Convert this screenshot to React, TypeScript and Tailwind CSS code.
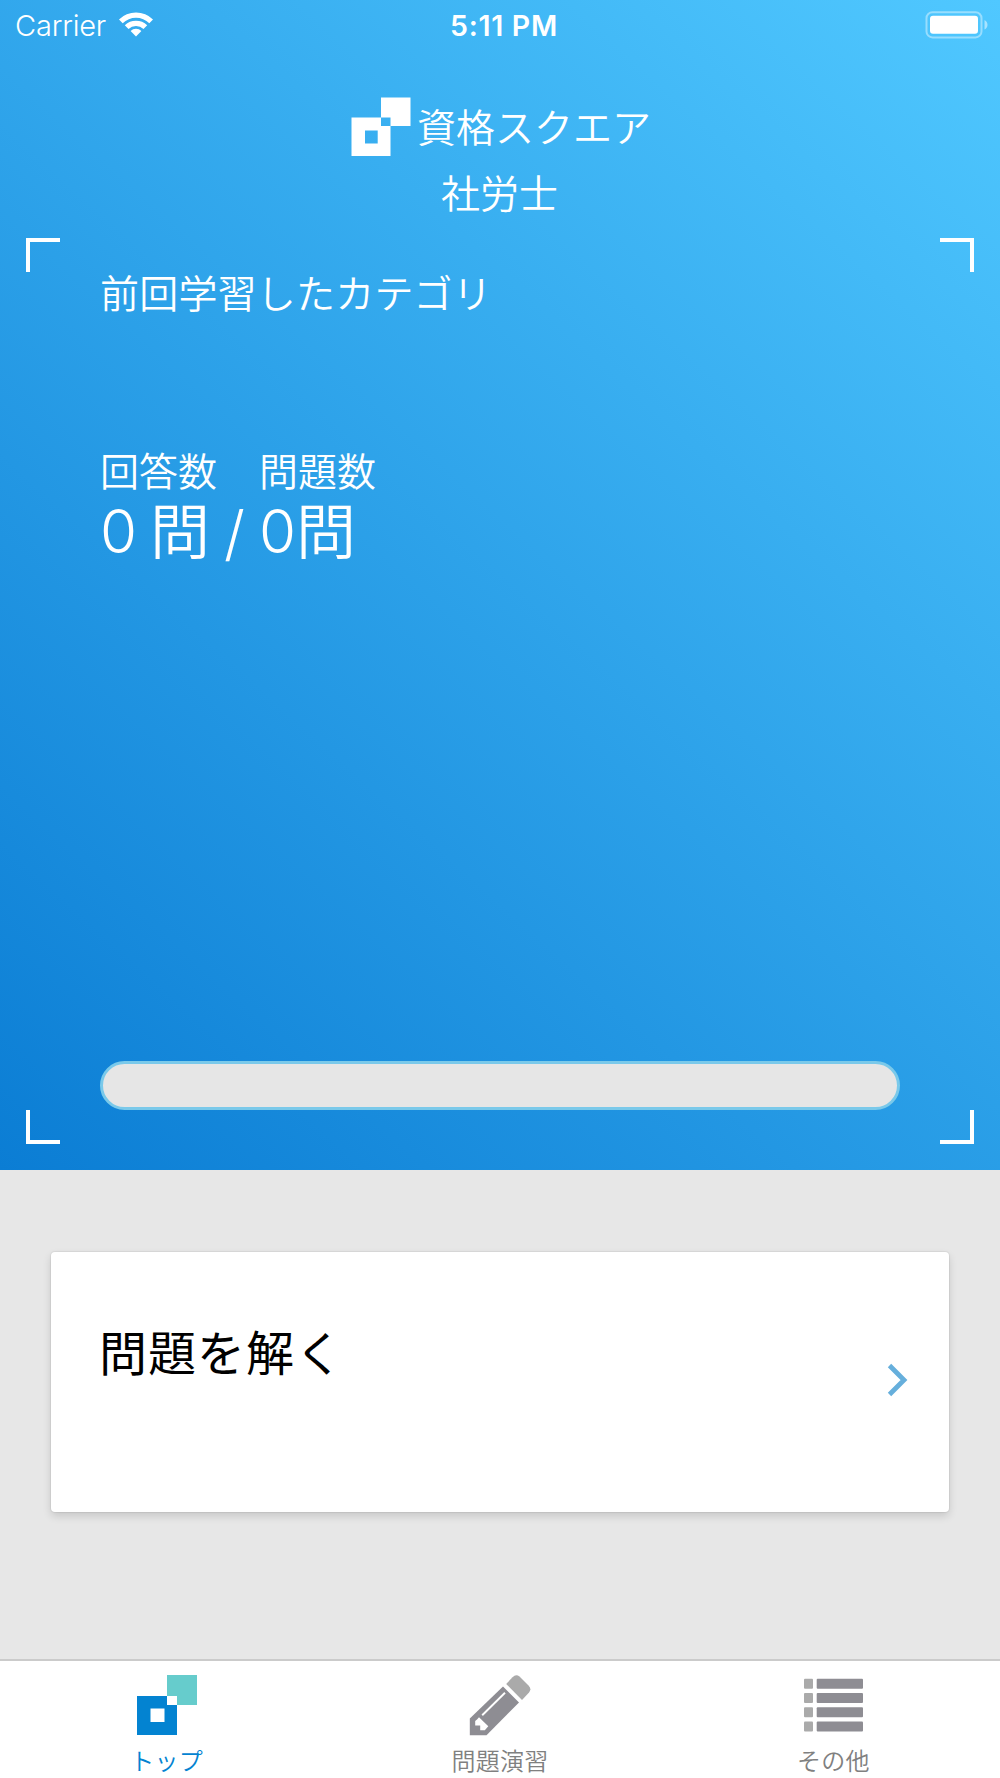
import React from 'react';

type TabId = 'top' | 'practice' | 'other';

interface TabItem {
  id: TabId;
  label: string;
  icon: React.ReactNode;
}

const WifiIcon = () => (
  <svg width="36" height="26" viewBox="0 0 36 26" className="ml-[12px] shrink-0">
    <path fill="#fff" d="M1 7.4A24.3 24.3 0 0 1 35 7.4L31.3 11.2A19 19 0 0 0 4.7 11.2Z" />
    <path fill="#fff" d="M6.8 13.2A16.2 16.2 0 0 1 29.2 13.2L25.5 16.9A10.9 10.9 0 0 0 10.5 16.9Z" />
    <path fill="#fff" d="M12.6 19A7.8 7.8 0 0 1 23.4 19L18 24.5Z" />
  </svg>
);

const BatteryIcon = () => (
  <svg width="64" height="28" viewBox="0 0 64 28">
    <rect x="1.5" y="1.2" width="55" height="25.2" rx="6" fill="none" stroke="#fff" strokeOpacity="0.42" strokeWidth="2" />
    <rect x="5" y="4.8" width="48" height="18" rx="3" fill="#fff" />
    <path d="M59.5 9C63.5 11 63.5 16.6 59.5 18.6Z" fill="#fff" fillOpacity="0.5" />
  </svg>
);

const LogoMark = () => (
  <svg width="60" height="60" viewBox="0 0 60 60" className="shrink-0">
    <path
      fill="#fff"
      fillRule="evenodd"
      d="M30 0.5H59.5V29H39.5V59H0.5V20.5H30ZM30 20.5V29H39.5V20.5ZM14 33.5V46.5H26.7V33.5Z"
    />
  </svg>
);

const TopIcon = () => (
  <svg width="60" height="60" viewBox="0 0 60 60">
    <path fill="#66cccc" d="M30 0H60V30H40V21H30Z" />
    <path fill="#0383d1" fillRule="evenodd" d="M0 21H30V30H40V60H0ZM13.5 33.5V47H27.5V33.5Z" />
  </svg>
);

const PencilIcon = () => (
  <svg width="62" height="62" viewBox="0 0 62 62">
    <path
      fill="#aaaaaa"
      d="M37.2 9L43.5 2.2Q47 -1.5 50.5 1.5L59.5 10.5Q63 14 60 17.5L53 25Z"
    />
    <path fill="#8e8d93" d="M34 11.5L50 27.5L17.5 60.3H0.8V43.5Z" />
    <path stroke="#fff" strokeWidth="1.9" d="M13.2 40.3L36 17.8" />
    <path fill="#fff" d="M10 42.3L19.3 51.2L15.8 55.3H11.2V50.4H6.2V46L8 44.5Z" />
  </svg>
);

const ListIcon = () => (
  <svg width="60" height="60" viewBox="0 0 60 60">
    {[3.8, 18, 32.3, 46.6].map((y) => (
      <g key={y}>
        <rect x="1" y={y} width="9" height="10" rx="1" fill="#aaaaaa" />
        <rect x="13.7" y={y} width="46.3" height="10" rx="1" fill="#8e8d93" />
      </g>
    ))}
  </svg>
);

const tabs: TabItem[] = [
  { id: 'top', label: 'トップ', icon: <TopIcon /> },
  { id: 'practice', label: '問題演習', icon: <PencilIcon /> },
  { id: 'other', label: 'その他', icon: <ListIcon /> },
];

const StatusBar = () => (
  <div className="grid h-[50px] grid-cols-3 items-center font-['Inter','Noto_Sans_CJK_JP',sans-serif]">
    <div className="flex items-center pl-[15px]">
      <span className="text-[29px] leading-none font-[350] tracking-[-0.2px]">Carrier</span>
      <WifiIcon />
    </div>
    <span className="pt-[2px] pl-[8px] text-center text-[28.5px] leading-none font-[560] tracking-[0.7px]">5:11 PM</span>
    <div className="flex justify-end pr-[11px]">
      <BatteryIcon />
    </div>
  </div>
);

// Corner brackets around the study summary
const Frame = ({ children }: { children: React.ReactNode }) => (
  <section className="relative mx-[26px] h-[906px]">
    <i className="absolute top-0 left-0 size-[34px] border-t-4 border-l-4 border-white" />
    <i className="absolute top-0 right-0 size-[34px] border-t-4 border-r-4 border-white" />
    <i className="absolute bottom-0 left-0 size-[34px] border-b-4 border-l-4 border-white" />
    <i className="absolute right-0 bottom-0 size-[34px] border-r-4 border-b-4 border-white" />
    {children}
  </section>
);

const Summary = () => (
  <Frame>
    <div className="flex h-full flex-col px-[74px] pt-[33px] pb-[34px]">
      <h2 className="text-[39px] leading-[40px] font-[350] tracking-[0.2px]">前回学習したカテゴリ</h2>
      <div className="mt-[138px] flex text-[39px] leading-[40px] font-[350]">
        <span className="w-[159px]">回答数</span>
        <span>問題数</span>
      </div>
      <div className="mt-[5px] flex text-[60px] leading-[68px] font-[350]">
        <span className="w-[50px] pt-[3px] font-['Inter'] font-[350]">0</span>
        <span className="w-[74px]">問</span>
        <span className="w-[35px] pt-[5px] font-['Inter'] font-[350]">/</span>
        <span className="w-[37px] pt-[3px] font-['Inter'] font-[350]">0</span>
        <span>問</span>
      </div>
      <div className="mt-auto h-[49px] rounded-full border-[3px] border-[#7ac9ea] bg-[#e6e6e6]" />
    </div>
  </Frame>
);

export default function App() {
  const [active, setActive] = React.useState<TabId>('top');

  return (
    <div className="flex h-[1778px] w-[1000px] flex-col overflow-hidden bg-[#e7e7e7] font-['Noto_Sans_CJK_JP',sans-serif]">
      <header className="h-[1170px] shrink-0 bg-[linear-gradient(42deg,#0b7dd4,#50c8ff)] text-white">
        <StatusBar />
        <div className="flex h-[188px] flex-col items-center pt-[47px]">
          <div className="flex items-center gap-[6px] pl-[2px]">
            <LogoMark />
            <h1 className="-mt-[5px] text-[39px] leading-[60px] font-[350]">資格スクエア</h1>
          </div>
          <p className="mt-[14px] pr-px text-[39px] leading-[40px] font-[350]">社労士</p>
        </div>
        <Summary />
      </header>

      <main className="flex-1 px-[51px] pt-[82px]">
        <button className="flex h-[260px] w-full items-start justify-between rounded-[4px] bg-white pr-[40px] pl-[48px] text-left shadow-[0_0_1px_1px_rgba(0,0,0,0.06),0_4px_8px_rgba(0,0,0,0.14)]">
          <span className="mt-[68px] text-[48px] leading-[60px] tracking-[1px] text-black">問題を解く</span>
          <svg width="22" height="34" viewBox="0 0 22 34" className="mt-[111px]">
            <path d="M2.5 2.5L17 17L2.5 31.5" fill="none" stroke="#66afdc" strokeWidth="4.8" />
          </svg>
        </button>
      </main>

      <nav className="grid h-[119px] shrink-0 grid-cols-3 border-t-2 border-[#cbcbcb] bg-white">
        {tabs.map((tab) => (
          <button
            key={tab.id}
            onClick={() => setActive(tab.id)}
            className={`flex flex-col items-center pt-[14px] text-[24px] leading-[30px] font-[350] ${
              active === tab.id ? 'text-[#0383d1]' : 'text-[#808080]'
            }`}
          >
            <span className="h-[62px]">{tab.icon}</span>
            <span className="mt-[8px] tracking-[0.2px]">{tab.label}</span>
          </button>
        ))}
      </nav>
    </div>
  );
}
